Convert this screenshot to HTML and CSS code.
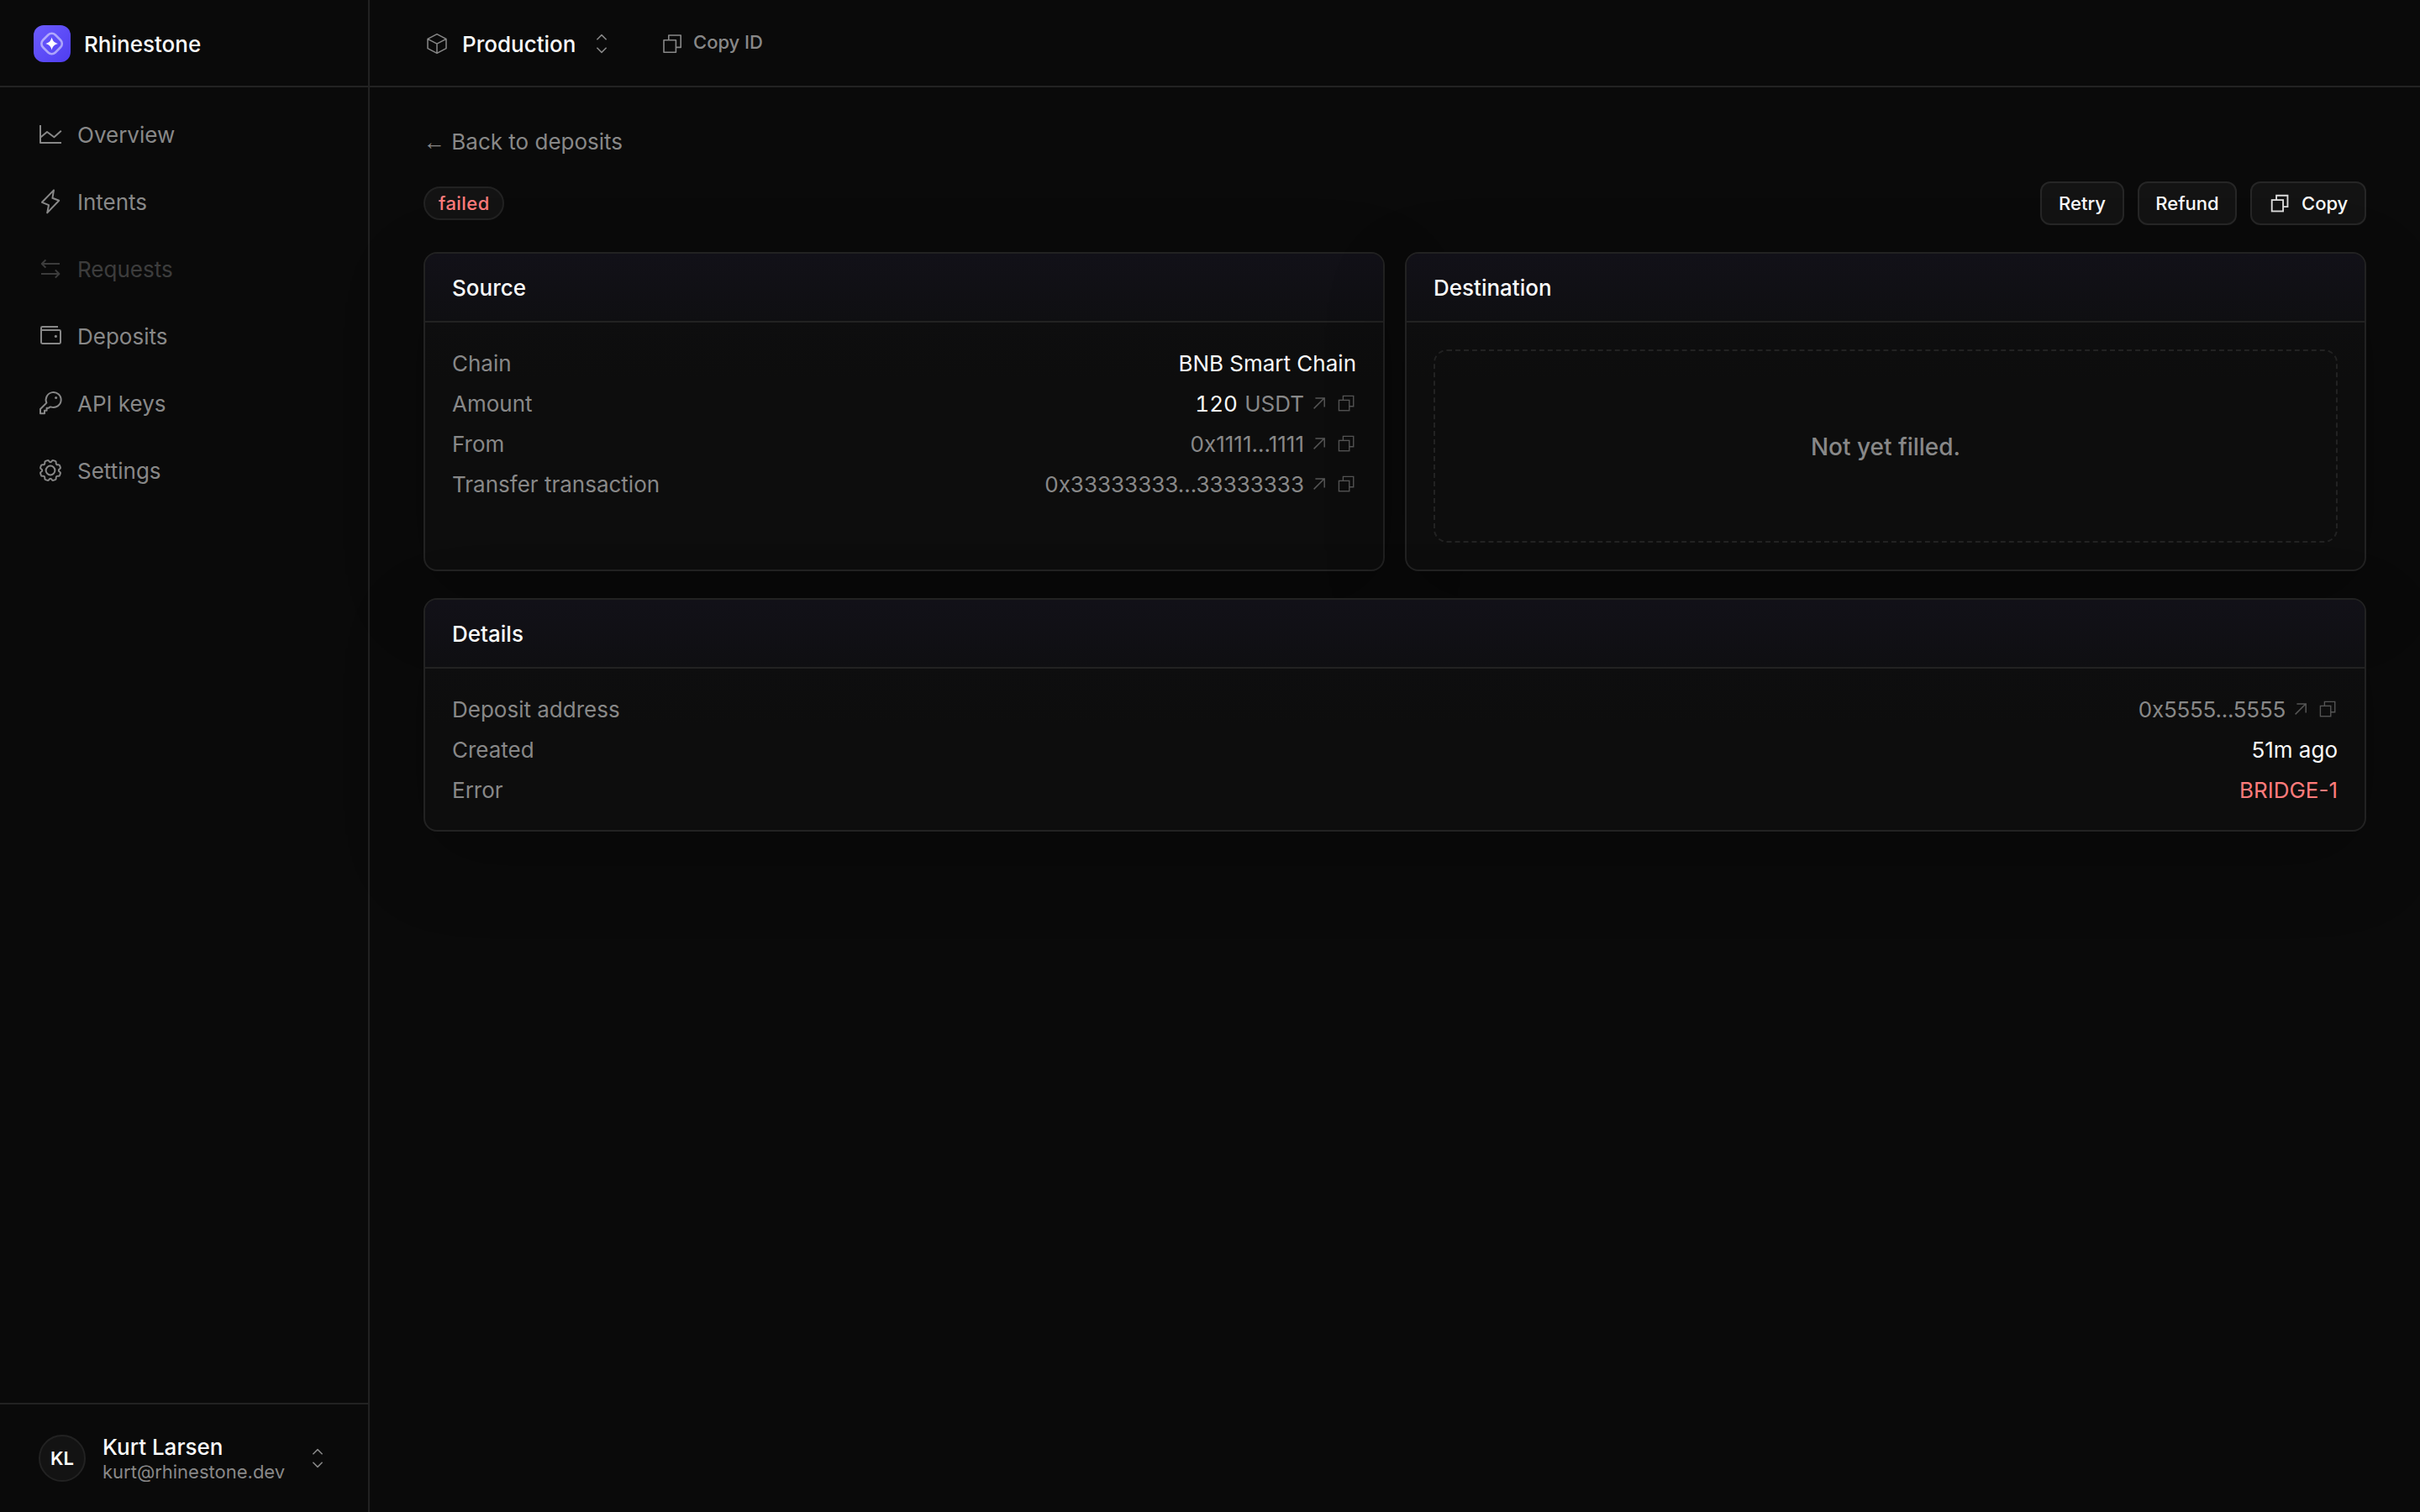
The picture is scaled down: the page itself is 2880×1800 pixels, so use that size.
FILE: index.html
```
<!DOCTYPE html>
<html lang="en">
<head>
    <meta charset="UTF-8">
    <meta name="viewport" content="width=device-width, initial-scale=1.0">
    <title>Deposit - Rhinestone</title>
    <link rel="stylesheet" href="styles.css">
</head>
<body>
    <!-- shared icons -->
    <svg class="sprite" aria-hidden="true">
        <symbol id="icon-copy" viewBox="0 0 28 28">
            <rect x="4" y="9.8" width="14.4" height="14.4" />
            <path d="M9.8 9.8V4h14.4v14.4h-5.8" />
        </symbol>
        <symbol id="icon-arrow" viewBox="0 0 24 24">
            <path d="M5.6 18.4L18.2 5.8M7.4 6h10.8v10.4" />
        </symbol>
        <symbol id="icon-updown" viewBox="0 0 32 32">
            <path d="M10.4 11.2L16 5.6l5.6 5.6M10.4 20.8l5.6 5.6 5.6-5.6" />
        </symbol>
    </svg>

    <div class="app">
        <aside class="sidebar">
            <div class="brand">
                <svg class="logo" viewBox="0 0 44 44">
                    <defs>
                        <linearGradient id="logo-bg" x1="0" y1="0" x2="1" y2="1">
                            <stop offset="0" stop-color="#6c5cff" />
                            <stop offset="1" stop-color="#4f3df0" />
                        </linearGradient>
                    </defs>
                    <rect width="44" height="44" rx="12" fill="url(#logo-bg)" />
                    <rect x="11.2" y="11.6" width="20.8" height="20.8" rx="6" transform="rotate(45 21.6 22)" fill="none" stroke="#fff" stroke-opacity=".5" stroke-width="2.6" />
                    <path d="M21.6 14.6C22.8 19 24.6 20.8 29 22c-4.4 1.2-6.2 3-7.4 7.4C20.4 25 18.6 23.2 14.2 22c4.4-1.2 6.2-3 7.4-7.4z" fill="#fff" />
                </svg>
                <span class="brand-name">Rhinestone</span>
            </div>

            <nav class="nav">
                <a class="nav-item">
                    <svg class="icon" viewBox="0 0 32 32"><path d="M4 5v21h25M4.6 19.2L12 13l8.4 6.2 8.4-7.4" /></svg>
                    Overview
                </a>
                <a class="nav-item">
                    <svg class="icon" viewBox="0 0 32 32"><path d="M20 2.4l-1.6 9.4 7.8 3L12.2 29.4 14 20.2l-8-3.4z" /></svg>
                    Intents
                </a>
                <a class="nav-item disabled">
                    <svg class="icon" viewBox="0 0 32 32"><path d="M27 10H6M10.4 5.4L5.8 10l4.6 4.6M5 22h21M21.8 17.4l4.6 4.6-4.6 4.6" /></svg>
                    Requests
                </a>
                <a class="nav-item">
                    <svg class="icon" viewBox="0 0 32 32"><path d="M25 5H6.4C5.6 5 5 5.6 5 6.4v17.2c0 .8.6 1.4 1.4 1.4h20.2c.8 0 1.4-.6 1.4-1.4V10.4c0-.8-.6-1.4-1.4-1.4H5" /><circle class="dot" cx="22.4" cy="16.4" r="1.6" /></svg>
                    Deposits
                </a>
                <a class="nav-item">
                    <svg class="icon" viewBox="0 0 32 32"><path d="M11.4 15.6A9 9 0 1 1 17 20.6l-1.6-.2-1.6 1.4h-2.2v3H9v3.4H4V23z" /><circle class="dot" cx="22.6" cy="9.4" r="1.5" /></svg>
                    API keys
                </a>
                <a class="nav-item">
                    <svg class="icon" viewBox="0 0 32 32"><path d="M16 6.2q1 0 1.6-1.1.6-1.3 1.8-1l2.4.8q1 .4.9 1.8-.1 1.6.5 2.1.5.6 2.1.5 1.4-.1 1.8.9l.8 2.4q.3 1.2-1 1.8-1.1.6-1.1 1.6t1.1 1.6q1.3.6 1 1.8l-.8 2.4q-.4 1-1.8.9-1.6-.1-2.1.5-.6.5-.5 2.1.1 1.4-.9 1.8l-2.4.8q-1.2.3-1.8-1-.6-1.1-1.6-1.1t-1.6 1.1q-.6 1.3-1.8 1l-2.4-.8q-1-.4-.9-1.8.1-1.6-.5-2.1-.5-.6-2.1-.5-1.4.1-1.8-.9l-.8-2.4q-.3-1.2 1-1.8 1.1-.6 1.1-1.6t-1.1-1.6q-1.3-.6-1-1.8l.8-2.4q.4-1 1.8-.9 1.6.1 2.1-.5.6-.5.5-2.1-.1-1.4.9-1.8l2.4-.8q1.2-.3 1.8 1 .6 1.1 1.6 1.1z" /><circle cx="16" cy="16" r="5.4" /></svg>
                    Settings
                </a>
            </nav>

            <div class="user">
                <div class="avatar">KL</div>
                <div class="user-info">
                    <div class="user-name">Kurt Larsen</div>
                    <div class="user-email">kurt@rhinestone.dev</div>
                </div>
                <svg class="icon thin"><use href="#icon-updown" /></svg>
            </div>
        </aside>

        <div class="content">
            <header class="topbar">
                <div class="project">
                    <svg class="icon thin" viewBox="0 0 32 32"><path d="M16 4.6l11 5.8v11.2l-11 5.8-11-5.8V10.4zM5 10.4l11 5.8 11-5.8M16 16.2v11.2" /></svg>
                    <span class="project-name">Production</span>
                    <svg class="icon thin"><use href="#icon-updown" /></svg>
                </div>
                <div class="copy-id">
                    <svg class="icon"><use href="#icon-copy" /></svg>
                    <span>Copy ID</span>
                </div>
            </header>

            <main class="main">
                <a class="back"><span class="back-arrow">←</span> Back to deposits</a>

                <div class="toolbar">
                    <span class="badge">failed</span>
                    <div class="actions">
                        <button class="btn">Retry</button>
                        <button class="btn btn-refund">Refund</button>
                        <button class="btn btn-copy"><svg class="icon"><use href="#icon-copy" /></svg>Copy</button>
                    </div>
                </div>

                <div class="cards">
                    <section class="card">
                        <h2 class="card-title">Source</h2>
                        <div class="card-body">
                            <div class="row">
                                <span class="label">Chain</span>
                                <span class="value">BNB Smart Chain</span>
                            </div>
                            <div class="row">
                                <span class="label">Amount</span>
                                <span class="value"><span><span class="amount">120</span> <span class="muted">USDT</span></span><svg class="icon small arrow"><use href="#icon-arrow" /></svg><svg class="icon small"><use href="#icon-copy" /></svg></span>
                            </div>
                            <div class="row">
                                <span class="label">From</span>
                                <span class="value muted">0x1111...1111<svg class="icon small arrow"><use href="#icon-arrow" /></svg><svg class="icon small"><use href="#icon-copy" /></svg></span>
                            </div>
                            <div class="row">
                                <span class="label">Transfer transaction</span>
                                <span class="value muted">0x33333333...33333333<svg class="icon small arrow"><use href="#icon-arrow" /></svg><svg class="icon small"><use href="#icon-copy" /></svg></span>
                            </div>
                        </div>
                    </section>

                    <section class="card">
                        <h2 class="card-title">Destination</h2>
                        <div class="card-body">
                            <div class="empty">Not yet filled.</div>
                        </div>
                    </section>
                </div>

                <section class="card">
                    <h2 class="card-title">Details</h2>
                    <div class="card-body">
                        <div class="row">
                            <span class="label">Deposit address</span>
                            <span class="value muted"><span class="tight">0x5555...5555</span><svg class="icon small arrow"><use href="#icon-arrow" /></svg><svg class="icon small"><use href="#icon-copy" /></svg></span>
                        </div>
                        <div class="row">
                            <span class="label">Created</span>
                            <span class="value">51m ago</span>
                        </div>
                        <div class="row">
                            <span class="label">Error</span>
                            <span class="value error">BRIDGE-1</span>
                        </div>
                    </div>
                </section>
            </main>
        </div>
    </div>
</body>
</html>
```
FILE: styles.css
```
* {
    box-sizing: border-box;
}

body {
    margin: 0;
    background: #0a0a0a;
    color: #fafafa;
    font-family: 'Inter', 'Liberation Sans', sans-serif;
    font-size: 26px;
    line-height: 33px;
}

.sprite {
    display: none;
}

.app {
    display: flex;
    height: 100vh;
}

/* icons */
.icon {
    width: 32px;
    height: 32px;
    flex-shrink: 0;
    fill: none;
    stroke: #888;
    stroke-width: 2;
    stroke-linejoin: round;
}

.icon .dot {
    fill: #888;
    stroke: none;
}

.icon.thin {
    stroke-width: 1.5;
}

.icon.small {
    width: 24px;
    height: 24px;
    margin: 4px 0 0 8px;
    stroke: #555;
    stroke-width: 1.6;
    stroke-linejoin: miter;
}

.icon.arrow {
    margin-left: 6px;
    stroke-width: 1.5;
}

/* sidebar */
.sidebar {
    width: 440px;
    flex-shrink: 0;
    display: flex;
    flex-direction: column;
    border-right: 2px solid #222;
}

.brand {
    height: 104px;
    display: flex;
    align-items: center;
    gap: 16px;
    padding: 2px 40px 0;
    border-bottom: 2px solid #222;
}

.logo {
    width: 44px;
    height: 44px;
}

.brand-name {
    font-weight: 500;
}

.nav {
    flex: 1;
    display: flex;
    flex-direction: column;
    gap: 16px;
    padding: 24px;
}

.nav-item {
    height: 64px;
    display: flex;
    align-items: center;
    gap: 16px;
    padding: 0 20px;
    color: #888;
}

.nav-item.disabled {
    opacity: .4;
}

.user {
    height: 130px;
    display: flex;
    align-items: center;
    border-top: 2px solid #222;
    padding: 0 44px 0 46px;
}

.avatar {
    width: 56px;
    height: 56px;
    display: flex;
    align-items: center;
    justify-content: center;
    border: 2px solid #222;
    border-radius: 50%;
    background: #131313;
    font-size: 22px;
    font-weight: 600;
    line-height: 28px;
}

.user-info {
    flex: 1;
    margin-left: 20px;
}

.user-name {
    height: 32px;
    font-weight: 500;
}

.user-email {
    font-size: 22px;
    line-height: 28px;
    color: #888;
}

/* top bar */
.content {
    flex: 1;
    min-width: 0;
}

.topbar {
    height: 104px;
    display: flex;
    align-items: center;
    gap: 54px;
    padding: 2px 64px 0;
    border-bottom: 2px solid #222;
}

.project {
    display: flex;
    align-items: center;
}

.project-name {
    width: 136px;
    margin: 0 14px;
    font-weight: 500;
}

.copy-id {
    display: flex;
    align-items: center;
    gap: 11px;
    color: #888;
    font-size: 22px;
    font-weight: 500;
    line-height: 32px;
}

.copy-id .icon {
    width: 28px;
    height: 28px;
    stroke-width: 1.6;
}

.copy-id span {
    margin-bottom: 4px;
}

/* page */
.main {
    display: flex;
    flex-direction: column;
    gap: 32px;
    padding: 48px 64px;
}

.back {
    height: 32px;
    color: #888;
}

.back-arrow {
    font-family: 'Liberation Sans', sans-serif;
}

.toolbar {
    display: flex;
    align-items: center;
    justify-content: space-between;
}

.badge {
    width: 96px;
    height: 40px;
    padding-left: 16px;
    border: 2px solid #222;
    border-radius: 20px;
    background: #131313;
    color: #ff7b7b;
    font-size: 22px;
    font-weight: 500;
    line-height: 36px;
    letter-spacing: .02em;
}

.actions {
    display: flex;
    gap: 16px;
}

.btn {
    width: 100px;
    height: 52px;
    display: flex;
    align-items: center;
    justify-content: center;
    gap: 13px;
    padding: 0;
    border: 2px solid #262626;
    border-radius: 12px;
    background: #131313;
    color: #fafafa;
    font: 500 22px 'Inter', 'Liberation Sans', sans-serif;
}

.btn-refund {
    width: 118px;
}

.btn-copy {
    width: 138px;
    justify-content: flex-start;
    padding-left: 20px;
}

.btn .icon {
    width: 26px;
    height: 26px;
    stroke: #ddd;
    stroke-linejoin: miter;
}

.cards {
    display: grid;
    grid-template-columns: 1fr 1fr;
    gap: 24px;
}

.card {
    display: flex;
    flex-direction: column;
    border: 2px solid #222;
    border-radius: 16px;
    background: linear-gradient(#0f0f11, #0d0d0d 150px);
    box-shadow: 0 32px 96px rgba(0, 0, 0, .24);
    overflow: hidden;
}

.card-title {
    height: 82px;
    margin: 0;
    padding: 24px 32px;
    border-bottom: 2px solid #222;
    background: linear-gradient(#121118, #0f0f12);
    font-size: 26px;
    font-weight: 500;
}

.card-body {
    flex: 1;
    display: flex;
    flex-direction: column;
    gap: 16px;
    padding: 32px;
}

.row {
    height: 32px;
    display: flex;
    justify-content: space-between;
}

.label,
.muted {
    color: #888;
}

.value {
    display: flex;
    align-items: flex-start;
}

.amount {
    margin-right: 1px;
    font-variant-numeric: tabular-nums;
}

.tight {
    letter-spacing: -.25px;
}

.error {
    color: #ff7b7b;
}

.empty {
    height: 230px;
    display: flex;
    align-items: center;
    justify-content: center;
    padding-top: 3px;
    border: 2px dashed #222;
    border-radius: 16px;
    color: #888;
    font-size: 28px;
    font-weight: 500;
}
```
